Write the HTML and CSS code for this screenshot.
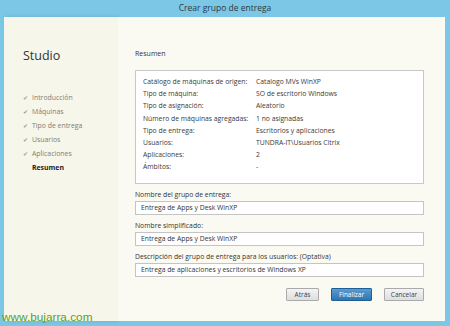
FILE: index.html
```html
<!DOCTYPE html>
<html lang="es">

<head>
    <meta charset="UTF-8">
    <meta name="viewport" content="width=device-width, initial-scale=1.0">
    <title>Crear grupo de entrega</title>
    <link rel="stylesheet" href="styles.css">
</head>

<body>
    <div class="window">
        <div class="titlebar">Crear grupo de entrega</div>
        <div class="frame">
            <div class="sidebar">
                <h1 class="brand">Studio</h1>
                <ul class="steps">
                    <li class="done">Introducción</li>
                    <li class="done">Máquinas</li>
                    <li class="done">Tipo de entrega</li>
                    <li class="done">Usuarios</li>
                    <li class="done">Aplicaciones</li>
                    <li class="current">Resumen</li>
                </ul>
            </div>
            <div class="main">
                <h2 class="pageTitle">Resumen</h2>
                <div class="summary">
                    <div class="row"><span class="key">Catálogo de máquinas de origen:</span><span>Catalogo MVs WinXP</span></div>
                    <div class="row"><span class="key">Tipo de máquina:</span><span>SO de escritorio Windows</span></div>
                    <div class="row"><span class="key">Tipo de asignación:</span><span>Aleatorio</span></div>
                    <div class="row"><span class="key">Número de máquinas agregadas:</span><span>1 no asignadas</span></div>
                    <div class="row"><span class="key">Tipo de entrega:</span><span>Escritorios y aplicaciones</span></div>
                    <div class="row"><span class="key">Usuarios:</span><span>TUNDRA-IT\Usuarios Citrix</span></div>
                    <div class="row"><span class="key">Aplicaciones:</span><span>2</span></div>
                    <div class="row"><span class="key">Ámbitos:</span><span>-</span></div>
                </div>

                <label class="fieldLabel">Nombre del grupo de entrega:</label>
                <div class="field">Entrega de Apps y Desk WinXP</div>

                <label class="fieldLabel">Nombre simplificado:</label>
                <div class="field">Entrega de Apps y Desk WinXP</div>

                <label class="fieldLabel">Descripción del grupo de entrega para los usuarios: (Optativa)</label>
                <div class="field">Entrega de aplicaciones y escritorios de Windows XP</div>

                <div class="buttons">
                    <button class="btn">Atrás</button>
                    <button class="btn primary">Finalizar</button>
                    <button class="btn cancel">Cancelar</button>
                </div>
            </div>
        </div>
        <div class="watermark">www.bujarra.com</div>
    </div>
</body>

</html>
```

FILE: styles.css
```css
* {
    margin: 0;
    padding: 0;
    box-sizing: border-box;
}

body {
    background-color: #7cc6e6;
    font-family: "Open Sans", "Noto Sans", sans-serif;
    color: #333;
}

.window {
    position: relative;
    width: 450px;
    height: 326px;
    display: flex;
    flex-direction: column;
}

.titlebar {
    height: 17px;
    line-height: 16px;
    text-align: center;
    font-size: 8.5px;
    color: #2b3a44;
}

.frame {
    display: flex;
    height: 304px;
    margin: 0 5px 0 4px;
    background-color: #f8f8f0;
}

.sidebar {
    width: 114px;
    padding: 31px 0 0 19px;
    background-color: #f6f6ea;
    box-shadow: 2px 0 4px rgba(0, 0, 0, 0.12);
}

.brand {
    font-size: 12.5px;
    font-weight: normal;
    line-height: 16px;
    color: #333;
}

.steps {
    list-style: none;
    margin-top: 27px;
}

.steps li {
    font-size: 6.9px;
    line-height: 14px;
    color: #7e7e76;
    padding-left: 9px;
    position: relative;
}

.steps li.done::before {
    content: '\2714';
    position: absolute;
    left: 0;
    color: #98a08e;
    font-size: 6px;
}

.steps li.current {
    color: #222;
    font-weight: bold;
}

.main {
    flex: 1;
    padding: 32px 21px 0 17px;
    background-color: #fafaf3;
}

.pageTitle {
    font-size: 7px;
    font-weight: normal;
    line-height: 10px;
    color: #333;
}

.summary {
    margin-top: 11px;
    height: 114px;
    padding: 5px 0 0 7px;
    background-color: #fff;
    border: 1px solid #c8c8c8;
}

.row {
    display: flex;
    font-size: 6.8px;
    line-height: 12.2px;
    color: #3a3a3a;
}

.row .key {
    width: 113px;
}

.fieldLabel {
    display: block;
    margin-top: 4px;
    font-size: 6.8px;
    line-height: 13px;
    color: #333;
}

.field {
    height: 14px;
    padding-left: 5px;
    font-size: 6.8px;
    line-height: 12px;
    background-color: #fff;
    border: 1px solid #c4c4c4;
    color: #333;
}

.buttons {
    display: flex;
    justify-content: flex-end;
    gap: 12px;
    margin-top: 11px;
}

.btn {
    width: 33px;
    height: 13px;
    font-family: inherit;
    font-size: 6.5px;
    color: #444;
    background: linear-gradient(#f4f4f4, #dedede);
    border: 1px solid #aaa;
    border-radius: 1px;
}

.btn.primary {
    width: 41px;
    color: #fff;
    background: linear-gradient(#5a9bd0, #2f75b0);
    border-color: #1f5f95;
}

.btn.cancel {
    width: 40px;
}

.watermark {
    position: absolute;
    left: 2px;
    bottom: 2px;
    font-size: 11.8px;
    line-height: 13px;
    color: #5aa02c;
    font-family: "Liberation Sans", sans-serif;
}
```
